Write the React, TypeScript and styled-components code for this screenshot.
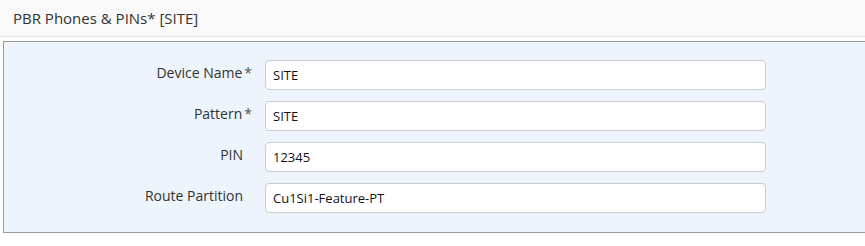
import React from "react";
import styled, { createGlobalStyle } from "styled-components";

const GlobalStyle = createGlobalStyle`
  html, body {
    margin: 0;
    padding: 0;
    background: #ffffff;
    font-family: "Open Sans", "Liberation Sans", sans-serif;
    overflow: hidden;
  }
`;

const Header = styled.div`
  height: 36px;
  display: flex;
  align-items: center;
  padding: 0 13px;
  background: #f9f9f9;
  border-bottom: 1px solid #e3e3e3;
`;

const Title = styled.h2`
  margin: 0;
  font-size: 15px;
  font-weight: 400;
  color: #333333;
`;

const Panel = styled.div`
  margin: 4px -20px 0 3px;
  padding: 18px 0 19px;
  background: #edf4fb;
  border: 1px solid #9a9a9a;
  display: flex;
  flex-direction: column;
  gap: 11px;
`;

const Row = styled.div`
  display: grid;
  grid-template-columns: 239px 501px;
  column-gap: 22px;
  align-items: start;
`;

const Label = styled.label`
  text-align: right;
  font-size: 14px;
  color: #333333;
  padding-top: 3px;
  line-height: 20px;
`;

const Required = styled.span`
  margin-left: 2px;
  margin-right: -9px;
  color: #555555;
`;

const Input = styled.input`
  box-sizing: border-box;
  height: 30px;
  width: 100%;
  padding: 0 7px;
  border: 1px solid #cccccc;
  border-radius: 4px;
  background: #ffffff;
  font-family: "Open Sans", "Liberation Sans", sans-serif;
  font-size: 13px;
  color: #111111;
  outline: none;
`;

const fields = [
  { label: "Device Name", required: true, value: "SITE" },
  { label: "Pattern", required: true, value: "SITE" },
  { label: "PIN", required: false, value: "12345" },
  { label: "Route Partition", required: false, value: "Cu1Si1-Feature-PT" },
];

const App: React.FC = () => {
  return (
    <>
      <GlobalStyle />
      <Header>
        <Title>PBR Phones &amp; PINs* [SITE]</Title>
      </Header>
      <Panel>
        {fields.map((f) => (
          <Row key={f.label}>
            <Label>
              {f.label}
              {f.required && <Required>*</Required>}
            </Label>
            <Input defaultValue={f.value} />
          </Row>
        ))}
      </Panel>
    </>
  );
};

export default App;
